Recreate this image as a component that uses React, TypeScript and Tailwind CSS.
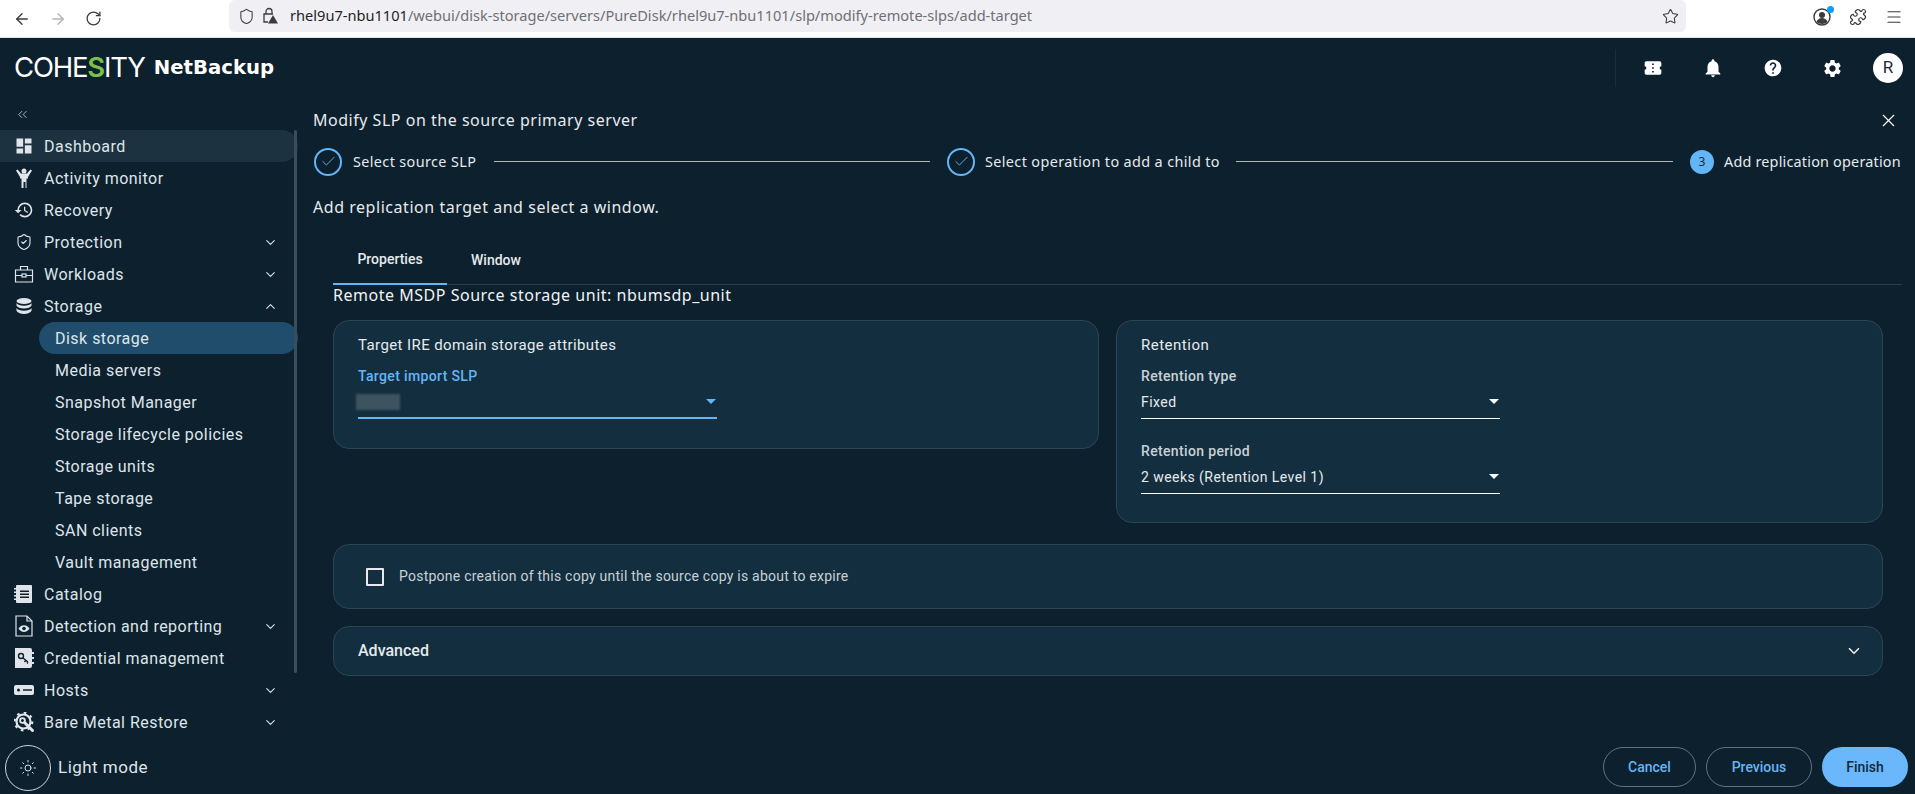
import { ArrowLeft, ArrowRight, Check, ChevronDown, ChevronUp, ChevronsLeft, Menu, Puzzle, RotateCw, Shield, ShieldCheck, Star, Sun, X } from 'lucide-react'
import { MdArrowDropDown, MdConfirmationNumber, MdDashboard, MdHelp, MdHistory, MdNotifications, MdSettings } from 'react-icons/md'

const roboto = 'font-[Roboto,sans-serif]'
const noto = "font-['Noto_Sans',sans-serif]"

const PersonIcon = () => (
  <svg width="18" height="20" viewBox="0 0 18 20" fill="currentColor" className="ml-[1px]">
    <circle cx="9" cy="3" r="2.500" />
    <path d="M1 2.500l1.600-1 3.400 4h6l3.400-4 1.600 1-4 6.500v1.500h-1.500V20H10.500v-6h-2v6H6.500v-9.500H5V9z" />
  </svg>
)

const BriefcaseIcon = () => (
  <svg width="20" height="18" viewBox="0 0 20 18" fill="none" stroke="currentColor" strokeWidth="1.200">
    <path d="M1.500 5h17v12h-17zM1.500 10.500h17" />
    <path d="M6.500 5V1.500h7V5" />
    <rect x="8" y="9" width="4" height="3" fill="#0d202e" />
  </svg>
)

const DatabaseIcon = () => (
  <svg width="18" height="16" viewBox="0 0 18 16" fill="currentColor" className="ml-[1px]">
    <ellipse cx="9" cy="3" rx="7.500" ry="3" />
    <path d="M1.500 5c1 1.800 3.800 2.800 7.500 2.800S15.500 6.800 16.500 5v2.500c-1 2-3.800 3-7.500 3S2.500 9.500 1.500 7.500z" />
    <path d="M1.500 10c1 1.800 3.800 2.800 7.500 2.800s6.500-1 7.500-2.800v2.800c-1 2-3.800 3.200-7.500 3.200s-6.500-1.200-7.500-3.200z" />
  </svg>
)

const CatalogIcon = () => (
  <svg width="20" height="20" viewBox="0 0 20 20" fill="currentColor">
    <path fillRule="evenodd" d="M3 1h14a1 1 0 0 1 1 1v16a1 1 0 0 1-1 1H3a1 1 0 0 1-1-1V2a1 1 0 0 1 1-1zm3 5.500v1.400h9V6.500zm0 3v1.400h9V9.500zm0 3v1.400h9v-1.400z" />
    <path d="M0 4h2v1.500H0zM0 7.500h2V9H0zM0 11h2v1.500H0zM0 14.500h2V16H0z" />
  </svg>
)

const ReportIcon = () => (
  <svg width="20" height="22" viewBox="0 0 20 22" fill="none" stroke="currentColor" strokeWidth="1.200">
    <path d="M2 1h11l5 5v15H2z" />
    <path d="M13 1v5h5" />
    <path d="M4.500 13.500c2.500-4.500 8.500-4.500 11 0-2.500 4.500-8.500 4.500-11 0z" fill="currentColor" stroke="none" />
    <circle cx="10" cy="13.500" r="1.800" fill="#0d202e" stroke="none" />
  </svg>
)

const KeyBookIcon = () => (
  <svg width="20" height="20" viewBox="0 0 20 20">
    <path d="M1 0h15a2 2 0 0 1 2 2v16a2 2 0 0 1-2 2H1z" fill="currentColor" />
    <path d="M18 4h2v2h-2zM18 9h2v2h-2zM18 14h2v2h-2z" fill="currentColor" />
    <circle cx="7" cy="8" r="2.500" fill="none" stroke="#0d202e" strokeWidth="1.400" />
    <path d="M9 10l5 4M12 12l-1.500 2M14 14l-1 1.500" stroke="#0d202e" strokeWidth="1.400" fill="none" />
  </svg>
)

const HostIcon = () => (
  <svg width="20" height="10" viewBox="0 0 20 10" fill="currentColor">
    <path fillRule="evenodd" d="M2 0h16a2 2 0 0 1 2 2v6a2 2 0 0 1-2 2H2a2 2 0 0 1-2-2V2a2 2 0 0 1 2-2zm2.500 3.500a1.500 1.500 0 1 0 0 3 1.500 1.500 0 0 0 0-3zM9 4.200v1.600h9V4.200z" />
  </svg>
)

const WrenchGearIcon = () => (
  <svg width="21" height="21" viewBox="0 0 21 21" fill="none" stroke="currentColor">
    <circle cx="9.500" cy="9.500" r="7" strokeWidth="2.200" />
    <circle cx="9.500" cy="9.500" r="8.800" strokeWidth="2.200" strokeDasharray="2.600 4.300" />
    <circle cx="8.500" cy="8.500" r="2.400" strokeWidth="1.800" />
    <path d="M10.500 10.500l8 8" strokeWidth="3" strokeLinecap="round" />
  </svg>
)

const nav = [
  { label: 'Dashboard', icon: <MdDashboard size={20} />, active: true },
  { label: 'Activity monitor', icon: <PersonIcon /> },
  { label: 'Recovery', icon: <MdHistory size={20} /> },
  { label: 'Protection', icon: <ShieldCheck size={18} strokeWidth={1.500} className="ml-[1px]" />, caret: 'down' },
  { label: 'Workloads', icon: <BriefcaseIcon />, caret: 'down' },
  { label: 'Storage', icon: <DatabaseIcon />, caret: 'up' },
  { label: 'Disk storage', sub: true, selected: true },
  { label: 'Media servers', sub: true },
  { label: 'Snapshot Manager', sub: true },
  { label: 'Storage lifecycle policies', sub: true },
  { label: 'Storage units', sub: true },
  { label: 'Tape storage', sub: true },
  { label: 'SAN clients', sub: true },
  { label: 'Vault management', sub: true },
  { label: 'Catalog', icon: <CatalogIcon /> },
  { label: 'Detection and reporting', icon: <ReportIcon />, caret: 'down' },
  { label: 'Credential management', icon: <KeyBookIcon /> },
  { label: 'Hosts', icon: <HostIcon />, caret: 'down' },
  { label: 'Bare Metal Restore', icon: <WrenchGearIcon />, caret: 'down' },
]

const BrowserBar = () => (
  <div className={`h-[38px] shrink-0 bg-white border-b border-[#e0e0e6] flex items-center ${noto}`}>
    <div className="w-[229px] shrink-0 flex items-center pl-[13px] gap-[18px] text-[#3b3b40]">
      <ArrowLeft size={18} strokeWidth={1.800} />
      <ArrowRight size={18} strokeWidth={1.800} className="text-[#b5b5b9]" />
      <RotateCw size={17} strokeWidth={1.800} />
    </div>
    <div className="w-[1457px] h-[32px] -mt-[5px] bg-[#f0f0f4] rounded-[6px] flex items-center pl-[9px] pr-[7px] text-[14.6px]">
      <Shield size={17} strokeWidth={1.500} className="text-[#3b3b40]" />
      <svg width="18" height="18" viewBox="0 0 18 18" className="ml-[6px] text-[#3b3b40]" fill="none" stroke="currentColor" strokeWidth="1.300">
        <path d="M5 7V4.500a3 3 0 0 1 6 0V7" />
        <path d="M7 15H3V7h9" />
        <path d="M12 8l5 8.500H7z" fill="currentColor" stroke="none" />
      </svg>
      <span className="ml-[11px] text-[#1f1f24]">rhel9u7-nbu1101</span>
      <span className="text-[#6f6f75]">/webui/disk-storage/servers/PureDisk/rhel9u7-nbu1101/slp/modify-remote-slps/add-target</span>
      <Star size={17} strokeWidth={1.500} className="ml-auto text-[#3b3b40]" />
    </div>
    <div className="flex-1 flex items-center justify-end pr-[12px] gap-[18px] text-[#3b3b40] -mt-[3px]">
      <div className="relative">
        <svg width="18" height="18" viewBox="0 0 18 18">
          <circle cx="9" cy="9" r="8" fill="none" stroke="currentColor" strokeWidth="1.400" />
          <circle cx="9" cy="7" r="3" fill="currentColor" />
          <path d="M3.500 14c1-3 3-4 5.500-4s4.500 1 5.500 4c-3 2.500-8 2.500-11 0z" fill="currentColor" />
        </svg>
        <span className="absolute -top-[2px] -right-[3px] w-[7px] h-[7px] rounded-full bg-[#0a9dff]" />
      </div>
      <Puzzle size={18} strokeWidth={1.600} />
      <Menu size={18} strokeWidth={1.600} />
    </div>
  </div>
)

const AppHeader = () => (
  <div className="h-[60px] shrink-0 flex items-center pl-[14px] pr-[12px]">
    <div className="flex items-center text-white font-['Inter',sans-serif] font-normal text-[27.5px] tracking-[-1.2px] leading-none">
      <span>COHE</span>
      <span className="text-[#7ac143] font-semibold">S</span>
      <span>ITY</span>
    </div>
    <span className="ml-[9px] text-white text-[19.7px] font-bold font-['DejaVu_Sans',sans-serif]">NetBackup</span>
    <div className="ml-auto flex items-center text-white">
      <div className="w-px h-[38px] bg-[#1b2e3c] mr-[27px]" />
      <MdConfirmationNumber size={20} />
      <MdNotifications size={22} className="ml-[39px]" />
      <MdHelp size={20} className="ml-[39px]" />
      <MdSettings size={21} className="ml-[39px]" />
      <div className={`ml-[30px] w-[30px] h-[30px] rounded-full bg-white text-[#1a2a36] text-[17px] flex items-center justify-center ${roboto}`}>R</div>
    </div>
  </div>
)

const Sidebar = () => (
  <div className={`relative w-[298px] shrink-0 flex flex-col ${roboto} text-[16px] tracking-[0.48px] text-[#dfe5ea]`}>
    <div className="h-[32px] flex items-center pl-[15px]">
      <ChevronsLeft size={15} strokeWidth={1.300} className="text-[#cfd6db]" />
    </div>
    <div className="flex flex-col">
      {nav.map(item => (
        <div
          key={item.label}
          className={`h-[32px] flex items-center rounded-r-full ${item.active ? 'bg-[#1c3240]' : ''} ${item.selected ? 'ml-[39px] rounded-l-full bg-[#1f4d6b]' : ''}`}
        >
          {item.sub
            ? <span className={`pt-[1px] ${item.selected ? 'pl-[16px]' : 'pl-[55px]'}`}>{item.label}</span>
            : (
                <>
                  <span className="w-[44px] pl-[14px] shrink-0 flex items-center">{item.icon}</span>
                  <span className="pt-[1px]">{item.label}</span>
                </>
              )}
          {item.caret === 'down' && <ChevronDown size={15} strokeWidth={1.700} className="ml-auto mr-[20px]" />}
          {item.caret === 'up' && <ChevronUp size={15} strokeWidth={1.700} className="ml-auto mr-[20px]" />}
        </div>
      ))}
    </div>
    <div className="absolute top-[32px] left-[294px] w-[3px] h-[543px] rounded-full bg-[#3a4d5b]" />
    <div className="mt-[7px] flex items-center pl-[5px]">
      <div className="w-[46px] h-[46px] rounded-full border border-[#cfd6db] flex items-center justify-center">
        <Sun size={18} strokeWidth={1.300} />
      </div>
      <span className="ml-[7px] text-[17px]">Light mode</span>
    </div>
  </div>
)

const StepDone = ({ className = '' }: { className?: string }) => (
  <div className={`w-[28px] h-[28px] rounded-full border-2 border-[#64b5f6] flex items-center justify-center shrink-0 ${className}`}>
    <Check size={17} strokeWidth={1.300} className="text-[#64b5f6]" />
  </div>
)

const Stepper = () => (
  <div className={`flex items-center h-[28px] mt-[15px] pt-[1px] ${noto} text-[14.4px] tracking-[0.38px] text-[#e6eaed]`}>
    <StepDone className="ml-[1px]" />
    <span className="ml-[11px] w-[123px] whitespace-nowrap">Select source SLP</span>
    <div className="ml-[18px] w-[436px] h-px bg-[#b5b8b5]" />
    <StepDone className="ml-[17px]" />
    <span className="ml-[10px] w-[234px] whitespace-nowrap">Select operation to add a child to</span>
    <div className="ml-[17px] w-[437px] h-px bg-[#b5b8b5]" />
    <div className="ml-[17px] w-[24px] h-[24px] rounded-full bg-[#64b5f6] text-[#10293a] text-[12px] flex items-center justify-center shrink-0">3</div>
    <span className="ml-[10px] whitespace-nowrap tracking-[0.2px]">Add replication operation</span>
  </div>
)

const cardClass = 'rounded-[16px] border border-[#2a4656] bg-[#132f3f]'

const SelectField = ({ label, value, focused }: { label: string, value?: string, focused?: boolean }) => (
  <div className="w-[359px]">
    <div className={`h-[20px] leading-[20px] text-[14px] tracking-[0.35px] font-medium ${focused ? 'text-[#64b5f6]' : 'text-[#c9d1d7]'}`}>{label}</div>
    <div className={`mt-[3px] h-[30px] flex items-center justify-between border-b ${focused ? 'border-b-2 border-[#64b5f6]' : 'border-white'} text-[14px] tracking-[0.45px] text-[#e6eaed]`}>
      {value
        ? <span className="-mt-[3px]">{value}</span>
        : <span className="-mt-[3px] -ml-[2px] w-[44px] h-[16px] bg-[#3e5360] blur-[1px]" />}
      <MdArrowDropDown size={24} className={`-mr-[6px] -mt-[5px] ${focused ? 'text-[#64b5f6]' : 'text-white'}`} />
    </div>
  </div>
)

const Content = () => (
  <div className={`flex-1 min-w-0 flex flex-col pl-[15px] pr-[7px] ${roboto}`}>
    <div className={`flex items-center justify-between h-[24px] mt-[10px] ${noto} text-[16px] tracking-[0.52px] text-[#e6eaed]`}>
      <span>Modify SLP on the source primary server</span>
      <X size={21} strokeWidth={1.300} className="mr-[9px] text-white" />
    </div>
    <Stepper />
    <div className={`mt-[20px] h-[24px] leading-[24px] ${noto} text-[16px] tracking-[0.54px] text-[#e6eaed]`}>Add replication target and select a window.</div>

    <div className="ml-[20px] mt-[19px]">
      <div className="flex h-[47px] mr-[6px] border-b border-[#2a3c49] text-[14px] font-medium text-[#e6eaed]">
        <div className="w-[114px] h-[47px] flex items-center justify-center border-b-2 border-[#64b5f6] pb-[2px]">Properties</div>
        <div className="ml-[12px] w-[74px] h-[46px] flex items-center justify-center pb-[1px]">Window</div>
      </div>
      <div className={`h-[20px] leading-[20px] text-[16px] tracking-[0.52px] text-[#f0f3f5] ${noto}`}>Remote MSDP Source storage unit: nbumsdp_unit</div>

      <div className="mt-[15px] mr-[25px] flex items-start gap-[17px]">
        <div className={`${cardClass} w-[766px] h-[129px] pl-[24px] pt-[14px]`}>
          <div className="text-[15px] tracking-[0.4px] leading-[20px] text-[#e6eaed] mb-[11px]">Target IRE domain storage attributes</div>
          <SelectField label="Target import SLP" focused />
        </div>
        <div className={`${cardClass} w-[767px] h-[203px] pl-[24px] pt-[14px]`}>
          <div className="text-[15px] tracking-[0.5px] leading-[20px] text-[#e6eaed] mb-[11px]">Retention</div>
          <SelectField label="Retention type" value="Fixed" />
          <div className="mt-[22px]">
            <SelectField label="Retention period" value="2 weeks (Retention Level 1)" />
          </div>
        </div>
      </div>

      <div className={`${cardClass} mt-[21px] mr-[25px] h-[65px] flex items-center pl-[32px]`}>
        <div className="w-[18px] h-[18px] border-2 border-[#e6eaed] rounded-[1px]" />
        <span className="ml-[15px] text-[14px] tracking-[0.24px] text-[#c9d1d7]">Postpone creation of this copy until the source copy is about to expire</span>
      </div>

      <div className={`${cardClass} mt-[17px] mr-[25px] h-[50px] flex items-center justify-between pl-[24px] pr-[19px]`}>
        <span className="text-[16px] font-medium text-[#e6eaed]">Advanced</span>
        <ChevronDown size={18} strokeWidth={2.200} className="text-[#e6eaed]" />
      </div>
    </div>

    <div className="mt-auto mb-[7px] flex justify-end text-[14px] font-medium">
      <button className="w-[93px] h-[40px] rounded-full border border-[#5f7380] text-[#64b5f6]">Cancel</button>
      <button className="ml-[10px] w-[106px] h-[40px] rounded-full border border-[#5f7380] text-[#64b5f6]">Previous</button>
      <button className="ml-[10px] w-[86px] h-[40px] rounded-full bg-[#6ab8fb] text-[#10293a]">Finish</button>
    </div>
  </div>
)

export default function App() {
  return (
    <div className="h-[794px] w-[1915px] overflow-hidden flex flex-col bg-[#0d202e]">
      <BrowserBar />
      <AppHeader />
      <div className="flex-1 min-h-0 flex">
        <Sidebar />
        <Content />
      </div>
    </div>
  )
}
